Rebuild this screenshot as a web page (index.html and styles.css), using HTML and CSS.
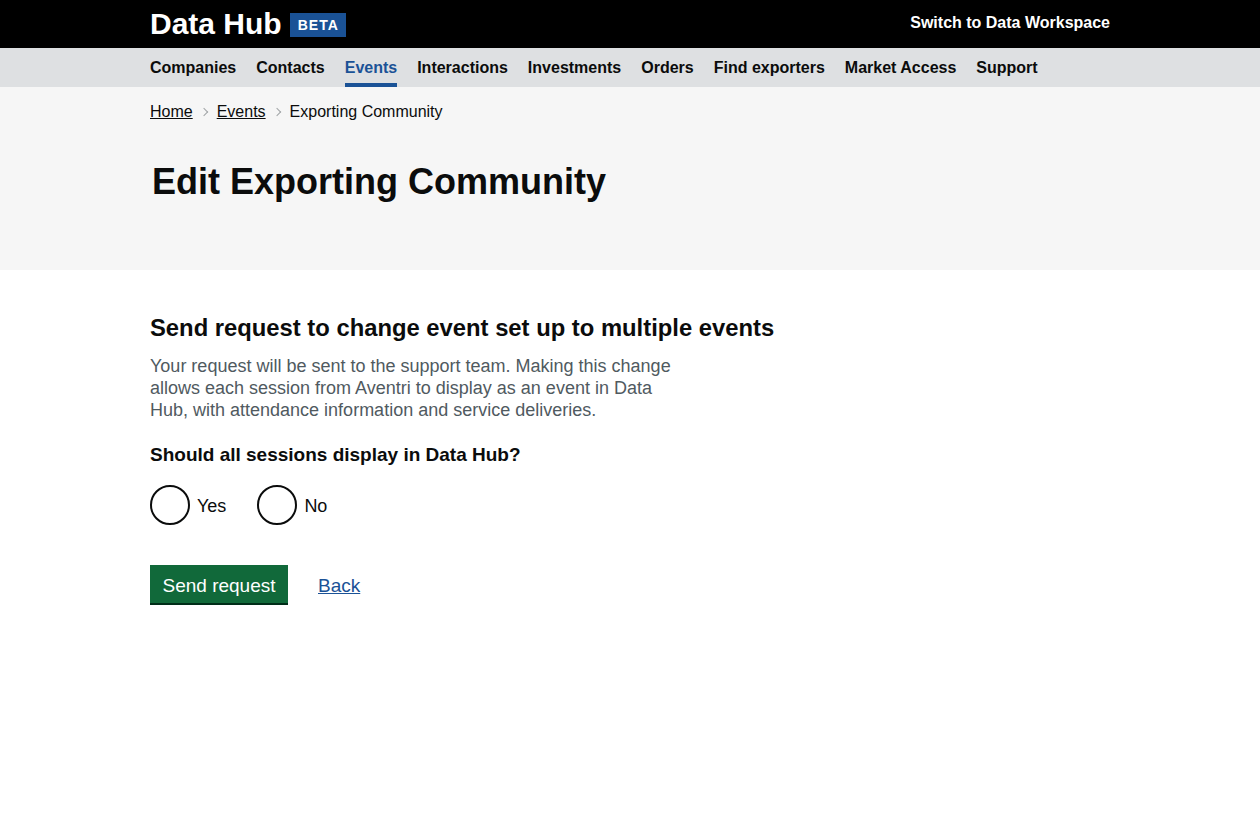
FILE: index.html
```html
<!DOCTYPE html>
<html lang="en">
<head>
<meta charset="utf-8">
<title>Edit Exporting Community - Data Hub</title>
<link rel="stylesheet" href="styles.css">
</head>
<body>
<header class="header">
  <div class="container header-inner">
    <div class="logo">
      <span class="logo-text">Data Hub</span>
      <span class="tag">BETA</span>
    </div>
    <a class="switch" href="#">Switch to Data Workspace</a>
  </div>
</header>
<nav class="nav">
  <ul class="container nav-list">
    <li><a href="#">Companies</a></li>
    <li><a href="#">Contacts</a></li>
    <li><a href="#" class="active">Events</a></li>
    <li><a href="#">Interactions</a></li>
    <li><a href="#">Investments</a></li>
    <li><a href="#">Orders</a></li>
    <li><a href="#">Find exporters</a></li>
    <li><a href="#">Market Access</a></li>
    <li><a href="#">Support</a></li>
  </ul>
</nav>
<section class="page-head">
  <div class="container">
    <ol class="breadcrumbs">
      <li><a href="#">Home</a></li>
      <li class="sep"></li>
      <li><a href="#">Events</a></li>
      <li class="sep"></li>
      <li>Exporting Community</li>
    </ol>
    <h1 class="title">Edit Exporting Community</h1>
  </div>
</section>
<main class="container main">
  <h2 class="h2">Send request to change event set up to multiple events</h2>
  <p class="hint">Your request will be sent to the support team. Making this change allows each session from Aventri to display as an event in Data Hub, with attendance information and service deliveries.</p>
  <fieldset class="fieldset">
    <legend class="legend">Should all sessions display in Data Hub?</legend>
    <div class="radios">
      <label class="radio"><span class="circle"></span><span class="radio-label">Yes</span></label>
      <label class="radio"><span class="circle"></span><span class="radio-label">No</span></label>
    </div>
  </fieldset>
  <div class="actions">
    <button class="button" type="button">Send request</button>
    <a class="back" href="#">Back</a>
  </div>
</main>
</body>
</html>
```
FILE: styles.css
```css
* { box-sizing: border-box; }
body {
  margin: 0;
  font-family: "Liberation Sans", Arial, sans-serif;
  color: #0b0c0c;
  background: #fff;
}
a { color: inherit; }
.container {
  width: 960px;
  margin: 0 auto;
}
.header {
  background: #000;
  height: 48px;
}
.header-inner {
  height: 48px;
  display: flex;
  align-items: center;
  justify-content: space-between;
}
.logo {
  display: flex;
  align-items: center;
  gap: 8px;
}
.logo-text {
  color: #fff;
  font-weight: 700;
  font-size: 30px;
  line-height: 34px;
}
.tag {
  background: #1a5296;
  color: #fff;
  font-weight: 700;
  font-size: 14px;
  letter-spacing: 1px;
  line-height: 24px;
  height: 24px;
  padding: 0 7px 0 8px;
  margin-top: 2px;
}
.switch {
  color: #fff;
  font-weight: 700;
  font-size: 16px;
  text-decoration: none;
  margin-top: -3px;
}
.nav {
  background: #dee0e2;
  height: 39px;
}
.nav-list {
  list-style: none;
  padding: 0;
  display: flex;
  gap: 20px;
  height: 39px;
}
.nav-list li { display: flex; }
.nav-list a {
  display: flex;
  align-items: center;
  font-weight: 700;
  font-size: 16px;
  text-decoration: none;
  color: #0b0c0c;
  border-bottom: 4px solid transparent;
  padding-top: 4px;
}
.nav-list a.active {
  color: #1a5296;
  border-bottom-color: #1a5296;
}
.page-head {
  background: #f6f6f6;
  padding: 15px 0 68px;
}
.breadcrumbs {
  list-style: none;
  margin: 0;
  padding: 0;
  display: flex;
  align-items: center;
  font-size: 16px;
  line-height: 20px;
}
.breadcrumbs a { color: #0b0c0c; }
.sep {
  width: 6px;
  height: 6px;
  border-top: 1px solid #a0a4a6;
  border-right: 1px solid #a0a4a6;
  transform: rotate(45deg);
  margin: 0 10px 0 8px;
}
.title {
  margin: 40px 0 0;
  padding-left: 2px;
  font-size: 36px;
  line-height: 40px;
  font-weight: 700;
}
.main {
  padding-top: 43px;
}
.h2 {
  margin: 0;
  font-size: 23.8px;
  line-height: 30px;
  font-weight: 700;
}
.hint {
  margin: 12px 0 0;
  max-width: 530px;
  font-size: 18px;
  line-height: 22px;
  color: #505a5f;
}
.fieldset {
  border: 0;
  margin: 21px 0 0;
  padding: 0;
}
.legend {
  padding: 0;
  font-size: 19px;
  line-height: 25px;
  font-weight: 700;
}
.radios {
  display: flex;
  margin-top: 18px;
}
.radio {
  display: flex;
  align-items: center;
  margin-right: 16px;
}
.circle {
  width: 40px;
  height: 40px;
  border: 2px solid #0b0c0c;
  border-radius: 50%;
  background: #fff;
}
.radio-label {
  font-size: 18px;
  padding: 2px 15px 0 7px;
}
.actions {
  display: flex;
  align-items: center;
  gap: 30px;
  margin-top: 40px;
}
.button {
  font-family: "Liberation Sans", Arial, sans-serif;
  background: #11693a;
  color: #fff;
  border: 0;
  font-size: 19px;
  line-height: 24px;
  height: 38px;
  padding: 9px 12px 5px;
  box-shadow: 0 2px 0 #002d18;
  margin-bottom: 2px;
  width: 138px;
}
.back {
  color: #1a5296;
  font-size: 19px;
  margin-top: 2px;
}
```
